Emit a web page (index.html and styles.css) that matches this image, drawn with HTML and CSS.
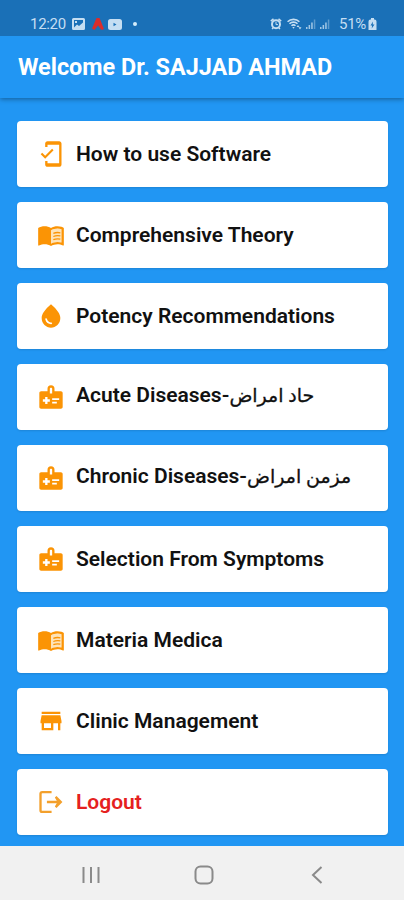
FILE: index.html
```html
<!DOCTYPE html>
<html lang="en">
<head>
    <meta charset="UTF-8">
    <meta name="viewport" content="width=device-width, initial-scale=1.0">
    <title>Home</title>
    <link rel="stylesheet" href="styles.css">
</head>
<body>
    <!-- shared icons -->
    <svg class="icon-defs">
        <symbol id="book" viewBox="0 0 24 24">
            <path class="page" d="M12 8c3-1.500 6-2 9-1v11.500c-3-1-6-.5-9 1z"/>
            <path d="M21 5c-1.110-.35-2.330-.5-3.500-.5-1.950 0-4.050.4-5.500 1.500-1.450-1.100-3.550-1.500-5.500-1.500S2.450 4.900 1 6v14.650c0 .25.25.5.5.5.1 0 .15-.05.25-.05C3.100 20.450 5.050 20 6.500 20c1.950 0 4.050.4 5.500 1.500 1.350-.85 3.800-1.500 5.500-1.500 1.650 0 3.350.3 4.750 1.050.1.05.15.05.25.05.25 0 .5-.25.5-.5V6c-.6-.45-1.250-.75-2-1zm0 13.500c-1.100-.35-2.300-.5-3.500-.5-1.700 0-4.150.65-5.500 1.500V8c1.350-.85 3.800-1.500 5.500-1.500 1.200 0 2.400.15 3.500.5v11.500z"/>
            <path fill="none" stroke="currentColor" stroke-width="1.100" d="M14 10.600c1.900-.8 4-.9 6-.5M14 13.300c1.900-.8 4-.9 6-.5M14 16c1.900-.8 4-.9 6-.5"/>
        </symbol>
        <symbol id="medical" viewBox="0 0 24 24">
            <path d="M20.500 7H15V5a3 3 0 0 0-6 0v2H3.500C2.700 7 2 7.700 2 8.500v12c0 .8.7 1.500 1.500 1.500h17c.8 0 1.500-.7 1.500-1.500v-12c0-.8-.7-1.500-1.500-1.500zM11 5c0-1.200 2-1.200 2 0v4h-2V5zm0 11H9v2H7v-2H5v-2h2v-2h2v2h2v2zm2-1.500V13h6v1.500h-6zm0 3V16h4v1.500h-4z"/>
        </symbol>
        <symbol id="signal" viewBox="0 0 12 12">
            <path d="M1 9h1.500v2H1zM3.600 7h1.500v4H3.600zM6.200 4.500h1.500V11H6.200z"/>
            <path opacity=".5" d="M8.800 1.500h1.500V11H8.800z"/>
        </symbol>
    </svg>

    <div class="status-bar">
        <div class="status-left">
            <span class="time">12:20</span>
            <svg class="image-icon" viewBox="0 0 13 12"><path fill-rule="evenodd" d="M1.500 0h10A1.500 1.500 0 0 1 13 1.500v9a1.500 1.500 0 0 1-1.500 1.500h-10A1.500 1.500 0 0 1 0 10.500v-9A1.500 1.500 0 0 1 1.500 0zM2 2v7.500l3-3 2 1.500 4-3.500V2zM3 3h2v2H3z"/></svg>
            <svg class="alert-icon" viewBox="0 0 12 12"><path d="M4.500 0h3L12 11 9.500 12 6 7.500 2.500 12 0 10.500z"/></svg>
            <svg class="video-icon" viewBox="0 0 14 11"><path fill-rule="evenodd" d="M2.500 0h9A2.500 2.500 0 0 1 14 2.500v6a2.500 2.500 0 0 1-2.500 2.500h-9A2.500 2.500 0 0 1 0 8.500v-6A2.500 2.500 0 0 1 2.500 0zM5.500 3.800v3.400l3-1.700z"/></svg>
            <span class="dot"></span>
        </div>
        <div class="status-right">
            <svg class="alarm-icon" viewBox="0 0 12 12"><path d="M.300 2.600 3 .300l1 1.200L1.300 3.800zM11.700 2.600 9 .300 8 1.500l2.700 2.300zM1.500 10.500 3 9l1 1-1.500 1.500zM10.500 10.500 9 9l-1 1 1.500 1.500z"/><circle cx="6" cy="6.300" r="4" fill="none" stroke="currentColor" stroke-width="2"/><path fill="none" stroke="currentColor" d="M6 4v2.600h2"/></svg>
            <svg class="wifi-icon" viewBox="0 0 15 12"><path fill="none" stroke="currentColor" stroke-width="1.600" d="M.600 3.800C3.800.500 9.200.500 12.400 3.800M2.500 5.800c2.200-2.200 5.800-2.200 8 0M4.500 7.800c1.100-1.100 2.900-1.100 4 0"/><path d="M5.300 9 6.500 10.800 7.700 9zM9.500 9l1.500-2 1.500 2zM11.500 9.200h3L13 11.500z"/></svg>
            <svg class="signal-icon"><use href="#signal"/></svg>
            <svg class="signal-icon"><use href="#signal"/></svg>
            <span class="percent">51%</span>
            <svg class="battery-icon" viewBox="0 0 9 12"><path fill-rule="evenodd" d="M3 0h3v1.500h.5A2 2 0 0 1 8.500 3.500V12h-8V3.500a2 2 0 0 1 2-2H3zM5 3.500 2.500 7.500h1.600L3.700 10.500 6.500 6.500H4.700z"/></svg>
        </div>
    </div>

    <header class="app-bar">
        <h1>Welcome Dr. SAJJAD AHMAD</h1>
    </header>

    <main class="menu">
        <a class="menu-item" href="#">
            <svg viewBox="0 0 24 24"><path d="M19 1H9c-1.100 0-2 .9-2 2v3h2V4h10v16H9v-2H7v3c0 1.100.9 2 2 2h10c1.100 0 2-.9 2-2V3c0-1.100-.9-2-2-2zM7.010 13.470l-2.550-2.550-1.270 1.270L7 16l7.190-7.190-1.270-1.270z"/></svg>
            <span>How to use Software</span>
        </a>
        <a class="menu-item" href="#">
            <svg><use href="#book"/></svg>
            <span>Comprehensive Theory</span>
        </a>
        <a class="menu-item" href="#">
            <svg viewBox="0 0 24 24"><path d="M12 2c-5.330 4.550-8 8.480-8 11.800 0 4.980 3.800 8.200 8 8.200s8-3.220 8-8.200c0-3.320-2.670-7.250-8-11.800zM7.830 14c.37 0 .67.26.74.62.41 2.220 2.280 2.980 3.640 2.870.43-.02.79.32.79.75 0 .4-.32.73-.72.75-2.130.13-4.620-1.090-5.190-4.120-.08-.45.28-.87.74-.87z"/></svg>
            <span>Potency Recommendations</span>
        </a>
        <a class="menu-item urdu" href="#">
            <svg><use href="#medical"/></svg>
            <span>Acute Diseases-<bdi lang="ur">حاد امراض</bdi></span>
        </a>
        <a class="menu-item urdu" href="#">
            <svg><use href="#medical"/></svg>
            <span>Chronic Diseases-<bdi lang="ur">مزمن امراض</bdi></span>
        </a>
        <a class="menu-item" href="#">
            <svg><use href="#medical"/></svg>
            <span>Selection From Symptoms</span>
        </a>
        <a class="menu-item" href="#">
            <svg><use href="#book"/></svg>
            <span>Materia Medica</span>
        </a>
        <a class="menu-item" href="#">
            <svg viewBox="0 0 24 24"><path d="M20 4H4v2h16V4zm1 10v-2l-1-5H4l-1 5v2h1v6h10v-6h4v6h2v-6h1zm-9 4H6v-4h6v4z"/></svg>
            <span>Clinic Management</span>
        </a>
        <a class="menu-item logout" href="#">
            <svg viewBox="0 0 24 24"><path fill="none" stroke="currentColor" stroke-width="2" d="M12.500 3.500H4.500a1.500 1.500 0 0 0-1.500 1.500v14a1.500 1.500 0 0 0 1.500 1.500h8M8.500 12H18"/><path d="M15.300 8.200 16.700 6.800 21.800 12l-5.100 5.200-1.400-1.400 2.200-3.800z"/></svg>
            <span>Logout</span>
        </a>
    </main>

    <nav class="nav-bar">
        <svg viewBox="0 0 24 24"><path d="M4.500 4v16M12 4v16M19.500 4v16"/></svg>
        <svg viewBox="0 0 24 24"><rect x="3.500" y="3.500" width="17" height="17" rx="5"/></svg>
        <svg viewBox="0 0 24 24"><path d="M16.500 4 8 12l8.500 8"/></svg>
    </nav>
</body>
</html>
```

FILE: styles.css
```css
* {
    box-sizing: border-box;
}
body {
    display: flex;
    flex-direction: column;
    height: 900px;
    margin: 0;
    overflow: hidden;
    font-family: Roboto, "Noto Sans", "DejaVu Sans", sans-serif;
    background-color: #2196f3;
}
svg {
    display: block;
    flex: none;
    fill: currentColor;
}
.icon-defs {
    position: absolute;
    width: 0;
    height: 0;
}
.page {
    fill: #fde3b8;
}
.status-bar {
    display: flex;
    justify-content: space-between;
    height: 36px;
    padding: 12px 27px 0 30px;
    background-color: #1a70b7;
    color: #c5def2;
    font-size: 15px;
    line-height: 24px;
}
.status-left,
.status-right {
    display: flex;
    align-items: center;
    height: 24px;
}
.time {
    width: 42px;
    letter-spacing: -0.3px;
}
.image-icon {
    width: 13px;
    height: 12px;
    margin-right: 7px;
}
.alert-icon {
    width: 12px;
    height: 12px;
    margin-right: 4px;
    color: #d92c2c;
}
.video-icon {
    width: 14px;
    height: 11px;
    margin-right: 11px;
}
.dot {
    width: 4px;
    height: 4px;
    border-radius: 50%;
    background-color: #d4ecfb;
}
.alarm-icon {
    width: 12px;
    height: 12px;
    margin-right: 5px;
}
.wifi-icon {
    width: 15px;
    height: 12px;
    margin-right: 3px;
}
.signal-icon {
    width: 12px;
    height: 12px;
    margin-right: 2px;
    opacity: 0.8;
}
.percent {
    margin-left: 6px;
    letter-spacing: -0.3px;
}
.battery-icon {
    width: 9px;
    height: 12px;
    margin-left: 2px;
}
.app-bar {
    height: 62px;
    padding: 0 18px;
    box-shadow: 0 1px 5px rgba(0, 0, 0, 0.4);
    clip-path: inset(0 0 -10px 0);
}
.app-bar h1 {
    margin: 0;
    color: #fff;
    font-size: 23.4px;
    font-weight: 700;
    line-height: 63px;
    white-space: nowrap;
}
.menu {
    display: flex;
    flex: 1;
    flex-direction: column;
    gap: 15px;
    padding: 23px 16px 0 17px;
}
.menu-item {
    display: flex;
    align-items: center;
    flex: none;
    height: 66px;
    padding-left: 20px;
    border-radius: 4px;
    background-color: #fff;
    color: #111;
    font-size: 21px;
    font-weight: 600;
    text-decoration: none;
    white-space: nowrap;
    box-shadow: 0 1px 2px rgba(0, 0, 0, 0.12);
}
.menu-item svg {
    width: 28px;
    height: 28px;
    margin-right: 11px;
    color: #fb9405;
}
.urdu span {
    padding-bottom: 4px;
}
.urdu bdi {
    font-size: 19px;
    font-weight: 500;
    -webkit-text-stroke: 0.3px #111;
}
.logout {
    color: #e52020;
}
.menu-item.logout svg {
    color: #f3a02c;
}
.nav-bar {
    display: flex;
    align-items: center;
    justify-content: space-between;
    height: 54px;
    padding: 4px 75px 0 79px;
    background-color: #f1f1f1;
}
.nav-bar svg {
    width: 24px;
    height: 24px;
    fill: none;
    stroke: #8a8a8a;
    stroke-width: 2;
}
```
